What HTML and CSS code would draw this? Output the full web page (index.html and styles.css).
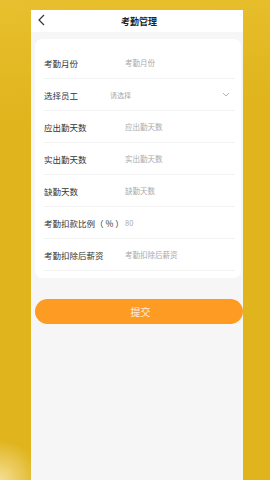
FILE: index.html
```html
<!DOCTYPE html>
<html lang="zh-CN">
<head>
  <meta charset="UTF-8" />
  <meta name="viewport" content="width=device-width, initial-scale=1.0"/>
  <title>考勤管理</title>
  <link rel="stylesheet" href="styles.css">
</head>
<body>
  <div class="screen">
    <div class="nav-bar">
      <svg class="back" width="7" height="12" viewBox="0 0 7 12"><path d="M6 1 L1 6 L6 11" fill="none" stroke="#333" stroke-width="1.2"/></svg>
      <div class="nav-title">考勤管理</div>
    </div>
    <div class="form-card">
      <div class="form-row"><span class="label">考勤月份</span><span class="value">考勤月份</span></div>
      <div class="form-row select-row">
        <span class="label">选择员工</span><span class="value">请选择</span>
        <svg class="chevron" width="8" height="5" viewBox="0 0 8 5"><path d="M1 1 L4 4 L7 1" fill="none" stroke="#aaa" stroke-width="0.9"/></svg>
      </div>
      <div class="form-row"><span class="label">应出勤天数</span><span class="value">应出勤天数</span></div>
      <div class="form-row"><span class="label">实出勤天数</span><span class="value">实出勤天数</span></div>
      <div class="form-row"><span class="label">缺勤天数</span><span class="value">缺勤天数</span></div>
      <div class="form-row"><span class="label">考勤扣款比例（ % ）</span><span class="value">80</span></div>
      <div class="form-row"><span class="label">考勤扣除后薪资</span><span class="value">考勤扣除后薪资</span></div>
    </div>
    <button class="submit-btn">提交</button>
  </div>
</body>
</html>
```

FILE: styles.css
```css
body {
  margin: 0;
  height: 480px;
  overflow: hidden;
  background:
    radial-gradient(circle at 0 480px, rgba(255, 240, 200, 0.7) 0, rgba(255, 240, 200, 0) 40px),
    linear-gradient(175deg, #e8bf2e 0%, #dfb41c 25%, #dfb41c 100%);
  font-family: "Noto Sans CJK SC", "Noto Sans", sans-serif;
}

.screen {
  margin: 10px 0 0 31px;
  width: 212px;
  height: 470px;
  background: #f6f6f6;
  display: flex;
  flex-direction: column;
}

.nav-bar {
  height: 22px;
  background: #fff;
  display: flex;
  align-items: center;
  justify-content: center;
  position: relative;
}

.back {
  position: absolute;
  left: 7px;
  top: 4px;
}

.nav-title {
  font-size: 9px;
  font-weight: bold;
  color: #222;
  margin-left: 4px;
}

.form-card {
  margin: 7px 2px 0 4px;
  background: #fff;
  border-radius: 7px;
  padding: 8px 6px 7px 9px;
}

.form-row {
  height: 31px;
  border-bottom: 1px solid #f2f2f2;
  display: flex;
  align-items: center;
}

.label {
  width: 81px;
  font-size: 8.5px;
  color: #333;
  white-space: nowrap;
}

.value {
  font-size: 7.5px;
  color: #aaa;
}

.select-row .label {
  width: 66px;
}

.select-row .value {
  font-size: 7px;
  flex: 1;
}

.chevron {
  margin-right: 5px;
}

.submit-btn {
  margin: 21px 0 0 4px;
  width: 208px;
  height: 25px;
  border: none;
  border-radius: 13px;
  background: #fe9b22;
  color: #ffeedd;
  font-family: inherit;
  font-size: 10px;
  padding: 0 0 0 3px;
}
```
